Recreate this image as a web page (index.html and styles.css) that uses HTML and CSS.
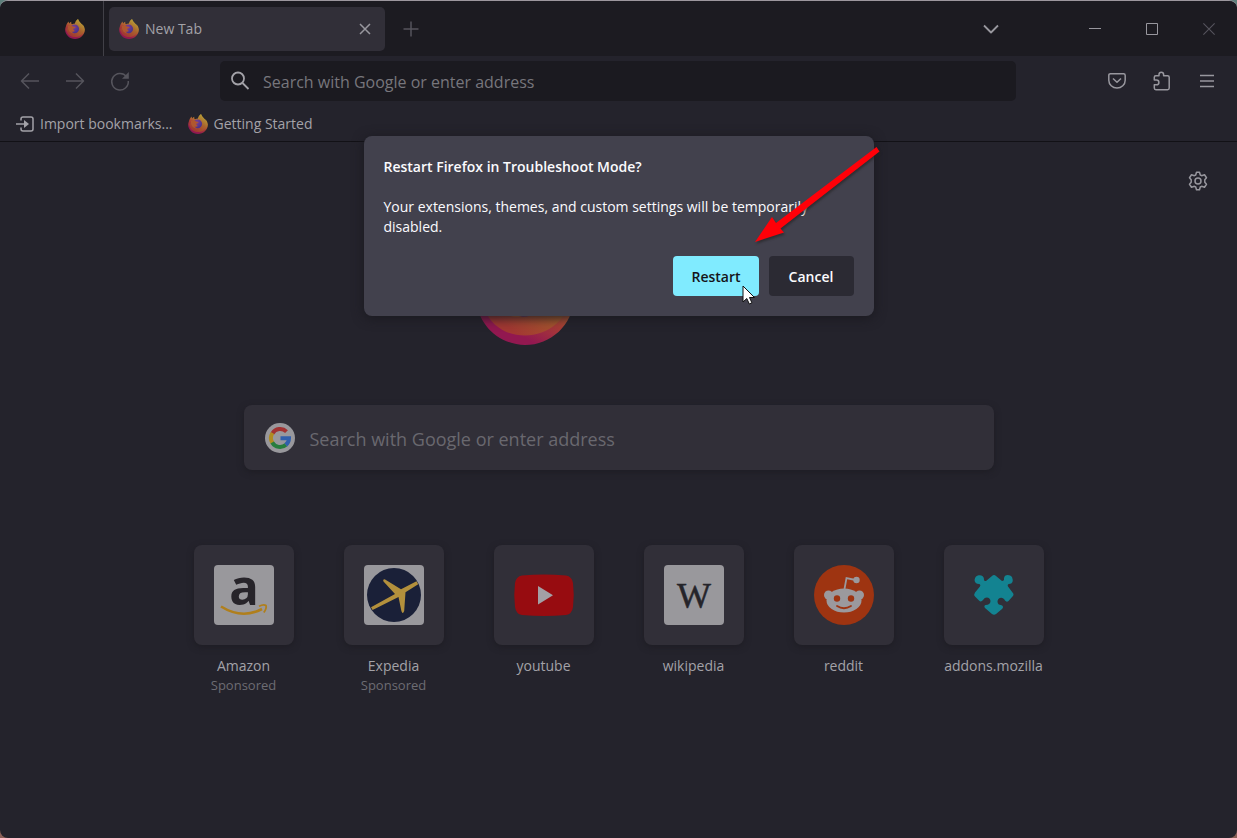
FILE: index.html
```html
<!DOCTYPE html>
<html lang="en">
<head>
  <meta charset="utf-8" />
  <meta name="viewport" content="width=device-width, initial-scale=1" />
  <title>New Tab</title>
  <link rel="stylesheet" href="styles.css">
</head>
<body>
  <svg class="defs" aria-hidden="true">
    <defs>
      <linearGradient id="flame" x1="0.85" y1="0.05" x2="0.3" y2="1">
        <stop offset="0" stop-color="#b9a638" />
        <stop offset="0.35" stop-color="#b87630" />
        <stop offset="0.6" stop-color="#a83c35" />
        <stop offset="0.85" stop-color="#921850" />
      </linearGradient>
      <linearGradient id="inner" x1="0.9" y1="0.1" x2="0.3" y2="0.9">
        <stop offset="0" stop-color="#b9a638" />
        <stop offset="0.5" stop-color="#a8622c" />
        <stop offset="1" stop-color="#a23832" />
      </linearGradient>
      <radialGradient id="globe" cx="0.4" cy="0.3" r="0.8">
        <stop offset="0" stop-color="#7a3f96" />
        <stop offset="1" stop-color="#41308a" />
      </radialGradient>
    </defs>
    <symbol id="firefox" viewBox="0 0 32 32">
      <path fill="url(#flame)" d="M30.600 12.200c-.7-1.700-2.100-3.500-3.200-4 .5 1 .9 2.100 1 3C26.600 7 23.500 5.200 21.800 2.300 21.300 1.500 21 .8 20.900 0c-3 1.600-4.600 4.800-4.900 7.200-1.700.1-3.300.6-4.700 1.300-1.300-.9-1.600-2.700-1.200-4.300-1.500.7-2.700 1.900-3.500 2.900-.6-.8-.6-2.600-.5-3.200C3.500 5.600 2 9 1.400 12 .9 13.600.2 15 .2 16.700.2 25.100 7.600 32 16 32s15.800-6.600 15.800-15.200c0-1.600-.7-3.200-1.200-4.600z" />
      <path fill="url(#inner)" d="M20.900.5c-2.500 2-3.900 5-3.400 8L7 13 1.800 16C2.500 24 8.500 28.900 16 28.900S30.500 23.500 30.500 16C29.500 8.500 22.500 6.500 20.900.5z" />
      <circle cx="15.500" cy="15.700" r="7" fill="url(#globe)" />
      <path fill="#b0572f" d="M4.500 11.500c3.500-1.500 7.500-.8 9.500 1 1 .2 2.500.2 3 .6-.3 1.400-3 1.600-3.600 2.600-.2 1.600.8 2.900 2.600 3.600-2 1.200-4 1.200-5.500.5 1 1.600 2.500 2.500 4.500 3-6 .8-10.500-4-10.500-11.300z" />
    </symbol>
    <symbol id="close" viewBox="0 0 16 16"><path d="M3 3l10 10M13 3L3 13" /></symbol>
    <symbol id="addon" viewBox="0 0 20 20"><path d="M2.300 7V6.300q0-1.500 1.500-1.500H7V3.500a2.300 2.300 0 0 1 4.600 0v1.300h4q1.600 0 1.600 1.500v10.800q0 1.600-1.600 1.600H3.900q-1.600 0-1.600-1.600v-3.300h2.200a2 2 0 0 0 0-4.800H2.300z" /></symbol>
  </svg>

  <div class="window">
    <header class="tabbar">
      <button class="view" aria-label="Firefox View"><svg class="logo"><use href="#firefox" /></svg></button>
      <div class="tab">
        <svg class="logo"><use href="#firefox" /></svg>
        <span class="tab-title">New Tab</span>
        <button class="icon" aria-label="Close tab"><svg width="16" height="16"><use href="#close" /></svg></button>
      </div>
      <button class="icon new-tab dim" aria-label="Open a new tab"><svg width="16" height="16"><path d="M8 0.500v15M0.500 8h15" /></svg></button>
      <button class="icon all-tabs" aria-label="List all tabs"><svg width="18" height="18"><path stroke-width="1.800" d="M2 5.500l7 7 7-7" /></svg></button>
      <div class="controls">
        <button class="icon" aria-label="Minimize"><svg width="14" height="14"><path d="M1 6.500h12" /></svg></button>
        <button class="icon" aria-label="Maximize"><svg width="14" height="14"><path d="M1.500 1.500h11v11h-11z" /></svg></button>
        <button class="icon dim" aria-label="Close"><svg width="18" height="18" viewBox="0 0 16 16"><use href="#close" width="16" height="16" /></svg></button>
      </div>
    </header>

    <nav class="navbar">
      <button class="icon dim" aria-label="Back"><svg width="20" height="20"><path d="M19 10H2M9 2.500L1.500 10 9 17.500" /></svg></button>
      <button class="icon dim" aria-label="Forward"><svg width="20" height="20"><path d="M1 10h17M11 2.500l7.500 7.500-7.500 7.500" /></svg></button>
      <button class="icon dim" aria-label="Reload"><svg width="20" height="20"><path d="M16.500 5.500A8.300 8.300 0 1 0 18.300 10" /><path class="fill" d="M18.800 1v6.800H12z" /></svg></button>
      <label class="urlbar">
        <svg width="20" height="20"><circle cx="8" cy="7.500" r="6" /><path d="M12.500 12l6 6" /></svg>
        <input type="text" placeholder="Search with Google or enter address" aria-label="Address" />
      </label>
      <button class="icon" aria-label="Save to Pocket"><svg width="20" height="20"><path d="M3.500 2.700h13q1.700 0 1.700 1.700v4.800a8.200 7.900 0 0 1-16.400 0V4.400q0-1.700 1.700-1.700z" /><path d="M6 7.500l4 3.800 4-3.800" /></svg></button>
      <button class="icon" aria-label="Extensions"><svg width="20" height="20"><use href="#addon" /></svg></button>
      <button class="icon" aria-label="Menu"><svg width="16" height="16"><path d="M1 2.500h14M1 8h14M1 13.500h14" /></svg></button>
    </nav>

    <div class="bookmarks">
      <a href="#"><svg class="import" width="18" height="18"><path d="M5 5.500V4q0-2 2-2h8q2 0 2 2v10q0 2-2 2H7q-2 0-2-2v-1.500M0 9h11" /><path class="fill" d="M8 5l5 4-5 4z" /></svg>Import bookmarks...</a>
      <a href="#"><svg class="logo"><use href="#firefox" /></svg>Getting Started</a>
    </div>

    <main class="newtab">
      <button class="icon settings" aria-label="Personalize new tab"><svg width="20" height="20"><circle cx="10" cy="10" r="3" /><path d="M8.500 1.200h3l.8 2.800 1.300.7 2.900-.9 2 2.900-1.700 2v2.600l1.700 2-2 2.900-2.900-.9-1.300.7-.8 2.800h-3l-.8-2.800-1.300-.7-2.900.9-2-2.900 1.700-2V8.700l-1.700-2 2-2.900 2.900.9 1.300-.7z" /></svg></button>

      <div class="brand"><svg width="98" height="98"><use href="#firefox" /></svg></div>

      <label class="search">
        <svg width="30" height="30" viewBox="0 0 30 30">
          <circle cx="15" cy="15" r="15" fill="#99989c" />
          <g fill="none" stroke-width="4">
            <path stroke="#a23232" d="M7.400 10.500A9 9 0 0 1 21.500 8.600" />
            <path stroke="#b08b20" d="M7.600 20.100A9 9 0 0 1 7.500 10" />
            <path stroke="#277d3d" d="M21 21.700A9 9 0 0 1 7.200 19.500" />
            <path stroke="#315fac" d="M15.500 15.200H24A9 9 0 0 1 20.800 21.900" />
          </g>
        </svg>
        <input type="text" placeholder="Search with Google or enter address" aria-label="Search" />
      </label>

      <div class="sites">
        <a class="site" href="#">
          <span class="tile"><svg width="60" height="60">
            <rect width="60" height="60" rx="4" fill="#99989c" />
            <text class="amazon" x="30" y="40">a</text>
            <path fill="none" stroke="#b07f1c" stroke-width="2.600" d="M7 41.500Q28 54.500 48 44" />
            <path fill="none" stroke="#b07f1c" stroke-width="1.800" d="M45 41.200c3-1.500 6-1.500 7-.7.600 2-.7 5-2.200 7" />
          </svg></span>
          <span>Amazon</span><small>Sponsored</small>
        </a>
        <a class="site" href="#">
          <span class="tile"><svg width="60" height="60">
            <rect width="60" height="60" rx="4" fill="#99989c" />
            <circle cx="30" cy="30" r="27" fill="#1a2038" />
            <path fill="#b3903c" d="M7 42.200L31 29 19.500 16.500q-1-2.300 1.200-2.300L37 24.200 52.500 16.300l1.700 3L41.500 27.200 40.200 46q-1.600 4-2.800 0L34.500 32 8.600 45z" />
          </svg></span>
          <span>Expedia</span><small>Sponsored</small>
        </a>
        <a class="site" href="#">
          <span class="tile"><svg width="60" height="60">
            <path fill="#970c10" d="M8 10.500q22-2 44 0Q58 11.500 59 18q1.500 12 0 24-1 7-7 8-22 2-44 0-6-1-7-8-1.500-12 0-24 1-6.500 7-7.500z" />
            <path fill="#a3a0a5" d="M24 21v18.500L39 30.200z" />
          </svg></span>
          <span>youtube</span>
        </a>
        <a class="site" href="#">
          <span class="tile"><svg width="60" height="60">
            <rect width="60" height="60" rx="4" fill="#99989c" />
            <text class="wiki" x="30" y="43">W</text>
          </svg></span>
          <span>wikipedia</span>
        </a>
        <a class="site" href="#">
          <span class="tile"><svg width="60" height="60">
            <circle cx="30" cy="30" r="30" fill="#9e3411" />
            <g fill="#9b999d">
              <circle cx="14.500" cy="30" r="4.500" /><circle cx="45.500" cy="30" r="4.500" />
              <ellipse cx="30" cy="35.500" rx="17.500" ry="12" />
              <circle cx="42.500" cy="15" r="3.200" />
            </g>
            <path fill="none" stroke="#9b999d" stroke-width="1.800" d="M30.500 24l2-11 9 2" />
            <g fill="#9e3411"><circle cx="23" cy="33.500" r="3.200" /><circle cx="37" cy="33.500" r="3.200" /></g>
            <path fill="none" stroke="#9e3411" stroke-width="1.800" stroke-linecap="round" d="M23 41q7 4.500 14 0" />
          </svg></span>
          <span>reddit</span>
        </a>
        <a class="site" href="#">
          <span class="tile"><svg width="60" height="60">
            <path fill="#138391" d="M28 11q2-2 4 0l6 5q2.500-.5 2-2.500c0-4.500 6-4.500 8-1.500q2.500 6.500-3 7-2 .5-1 2.500l4.500 6q2 2 0 4l-4 4.500q-2 1.500-3.500-.5c-2-4.500-7.500-3-7.500 1 0 2.500 1.500 3.500 3.500 3.500 2.500 1 2.500 2.500 1 4l-6 5q-2 1.500-4 0l-7-6q-1.500-2 .5-3c3 0 5-1.500 5-4 0-3.500-5-5.500-7.500-1q-2 2.500-4 .5l-4-4q-1.500-2 0-4l5-6q1-2-1-2.500c-5.500-.5-5-5-3-7.500 3-2.500 8-1.500 8 2.500q-.5 2 2 2z" />
          </svg></span>
          <span>addons.mozilla</span>
        </a>
      </div>
    </main>

    <dialog open class="dialog" aria-labelledby="dialog-title">
      <h1 id="dialog-title">Restart Firefox in Troubleshoot Mode?</h1>
      <p>Your extensions, themes, and custom settings will be temporarily disabled.</p>
      <div class="actions">
        <button class="primary">Restart</button>
        <button>Cancel</button>
      </div>
      <svg class="arrow" width="128" height="100"><path d="M124.500 0L127.500 4.500 28.500 81.500 32 85.500 3 95 20 70l4 6z" /></svg>
      <svg class="cursor" width="14" height="20"><path d="M1 1v16l3.800-3.500 2.500 5.500 2.600-1.200-2.400-5.300h5z" /></svg>
    </dialog>
  </div>
</body>
</html>
```
FILE: styles.css
```css
* { box-sizing: border-box; }
html, body { margin: 0; padding: 0; }
body { background: linear-gradient(#5d7f7b, #8a6058); color: #a3a2a8; font-family: "Open Sans", "Noto Sans", sans-serif; font-size: 14px; line-height: 20px; }
button { margin: 0; padding: 0; border: 0; background: none; color: inherit; font: inherit; }
a { color: inherit; text-decoration: none; }
svg { display: block; flex: none; overflow: visible; }
.defs { position: absolute; width: 0; height: 0; }
.logo { width: 20px; height: 20px; }

.window { position: relative; min-height: 100vh; background: #24232c; border-top: 1px solid #9c979e; border-radius: 8px; overflow: hidden; }

/* line icons */
.icon { display: flex; align-items: center; justify-content: center; color: #98979e; }
.icon svg, .urlbar svg, .import { fill: none; stroke: currentColor; stroke-width: 1.5; stroke-linejoin: round; }
.fill { fill: currentColor; stroke: none; }
.dim { color: #55545c; }

/* tab strip */
.tabbar { display: flex; align-items: center; height: 55px; background: #1c1b21; }
.view { display: flex; align-items: center; justify-content: flex-end; width: 104px; height: 55px; padding-right: 18px; border-right: 1px solid #414047; }
.tab { display: flex; align-items: center; gap: 6px; width: 276px; height: 44px; margin-left: 5px; padding: 0 12px 0 10px; background: #312f38; border-radius: 5px; }
.tab-title { flex: 1; }
.new-tab { width: 52px; height: 44px; }
.all-tabs { width: 40px; height: 40px; margin-left: auto; }
.controls { display: flex; margin-left: 55px; }
.controls .icon { width: 57px; height: 55px; }
.controls svg { stroke-width: 1; }

/* address row */
.navbar { display: flex; align-items: center; height: 50px; padding: 0 8px 0 7px; }
.navbar .icon { width: 45px; height: 40px; }
.urlbar { display: flex; flex: 1; align-items: center; gap: 13px; height: 40px; margin: 0 78px; padding: 0 10px; background: #1b1a20; border-radius: 5px; }
.urlbar svg { stroke-width: 1.8; }
input { flex: 1; min-width: 0; height: 32px; padding: 2px 0 0; border: 0; outline: 0; background: none; color: inherit; font: inherit; }
.urlbar input { font-size: 16px; }
.urlbar input::placeholder { color: #77767c; opacity: 1; }

.bookmarks { display: flex; gap: 15px; height: 36px; padding: 1px 16px 0; border-bottom: 1px solid #121116; }
.bookmarks a { display: flex; align-items: center; gap: 6px; }

/* new tab page */
.newtab { display: flex; flex-direction: column; align-items: center; }
.settings { width: 40px; height: 40px; margin: 19px 19px 0 0; align-self: flex-end; }
.brand { width: 286px; margin-top: 46px; }
.search { display: flex; align-items: center; gap: 15px; width: 750px; max-width: 90%; height: 65px; margin-top: 60px; padding: 0 21px; background: #312f38; border-radius: 8px; box-shadow: 0 2px 6px #1e1d24; }
.search input { font-size: 18px; }
.search input::placeholder { color: #69686f; opacity: 1; }
.sites { display: flex; gap: 50px; margin-top: 75px; }
.site { display: flex; flex-direction: column; align-items: center; width: 100px; white-space: nowrap; }
.tile { display: flex; align-items: center; justify-content: center; width: 100px; height: 100px; margin-bottom: 11px; background: #312f38; border-radius: 8px; box-shadow: 0 2px 6px #1e1d24; }
.site small { color: #6d6c73; font-size: 13px; line-height: 18px; }
.amazon { fill: #27242a; font: bold 49px "Open Sans", sans-serif; text-anchor: middle; }
.wiki { fill: #25242a; stroke: #25242a; stroke-width: 0.5; font: 36px "Liberation Serif", serif; text-anchor: middle; }

/* restart prompt */
.dialog { position: absolute; top: 135px; left: 0; right: 0; width: 510px; margin: 0 auto; padding: 21px 20px 20px; border: 0; border-radius: 8px; background: #42414d; color: #fbfbfe; box-shadow: 0 2px 12px #1a191f; }
.dialog h1 { margin: 0; font-size: 14px; font-weight: 600; line-height: 20px; }
.dialog p { margin: 20px 0 19px; }
.actions { display: flex; justify-content: flex-end; gap: 10px; }
.actions button { min-width: 85px; height: 40px; padding: 2px 18px 0; border-radius: 4px; background: #2b2a33; font-weight: 600; }
.actions .primary { background: #80ebff; color: #15141a; }
.arrow { position: absolute; top: 11px; right: -6px; fill: #ff0008; filter: drop-shadow(1px 2px 1px #2229); }
.cursor { position: absolute; top: 149px; left: 378px; fill: #fff; stroke: #111; }
```
